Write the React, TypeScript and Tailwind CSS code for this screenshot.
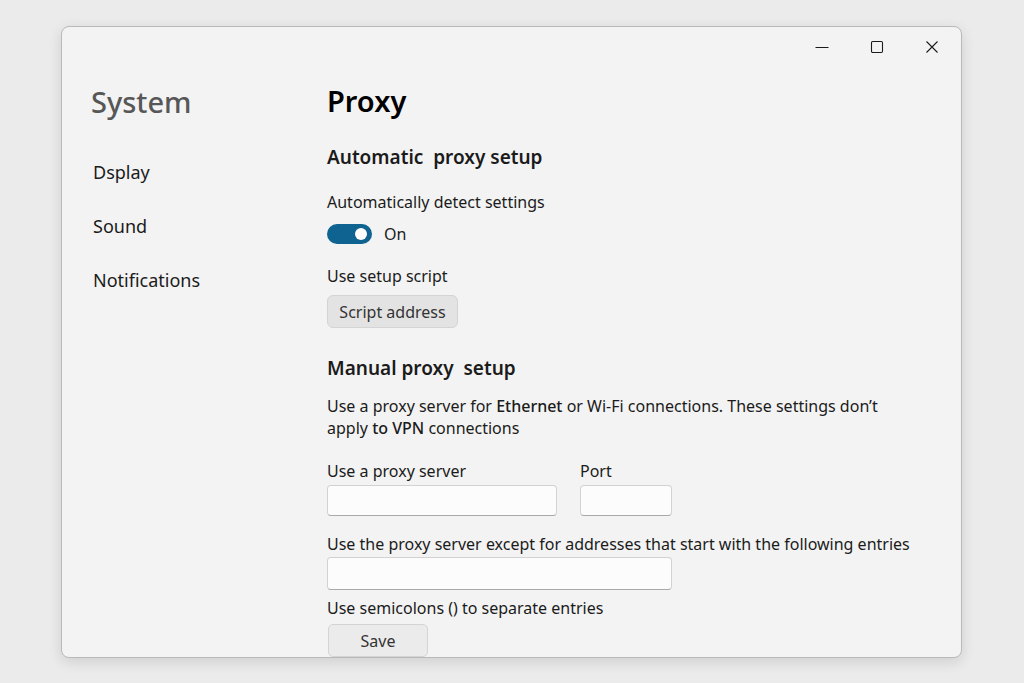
import React from "react";

const font = { fontFamily: '"Noto Sans", "Open Sans", sans-serif' };

function Toggle() {
  return (
    <div className="relative h-[20px] w-[45px] rounded-full bg-[#0e6391]">
      <div className="absolute right-[5px] top-[4px] h-[12px] w-[12px] rounded-full bg-white" />
    </div>
  );
}

export default function App() {
  return (
    <div
      className="h-[683px] w-full overflow-hidden bg-[#ebebeb] pl-[61px] pt-[26px] text-[#1b1b1b]"
      style={font}
    >
      <div className="h-[632px] w-[901px] overflow-hidden rounded-[8px] border border-[#b9b9b9] bg-[#f3f3f3] shadow-[0_4px_14px_rgba(0,0,0,0.12)]">
        {/* title bar */}
        <div className="flex h-[39px] justify-end pr-[2px]">
          <div className="flex w-[55px] items-center justify-center">
            <svg width="16" height="16" viewBox="0 0 16 16">
              <path d="M1.5 8.5h13" stroke="#1b1b1b" strokeWidth="1.1" />
            </svg>
          </div>
          <div className="flex w-[55px] items-center justify-center">
            <svg width="16" height="16" viewBox="0 0 16 16">
              <rect x="2.5" y="2.5" width="11" height="11" rx="1.2" fill="none" stroke="#1b1b1b" strokeWidth="1.1" />
            </svg>
          </div>
          <div className="flex w-[55px] items-center justify-center">
            <svg width="16" height="16" viewBox="0 0 16 16">
              <path d="M2.5 2.5l11 11M13.5 2.5l-11 11" stroke="#1b1b1b" strokeWidth="1.1" />
            </svg>
          </div>
        </div>

        <div className="flex">
          {/* sidebar */}
          <div className="w-[265px] shrink-0 pl-[29px]">
            <div className="mt-[18px] text-[29px] font-medium leading-[36px] text-[#575757]">System</div>
            <div className="ml-[2px] mt-[39px] text-[18px] leading-[26px]">Dsplay</div>
            <div className="ml-[2px] mt-[28px] text-[18px] leading-[26px]">Sound</div>
            <div className="ml-[2px] mt-[28px] text-[18px] leading-[26px]">Notifications</div>
          </div>

          {/* main */}
          <div className="flex-1">
            <div className="mt-[16px] text-[29px] font-semibold leading-[38px] text-black">Proxy</div>
            <div className="mt-[24px] whitespace-pre text-[19px] font-semibold leading-[26px]">Automatic  proxy setup</div>
            <div className="mt-[21px] text-[16px] leading-[22px]">Automatically detect settings</div>
            <div className="mt-[11px] flex h-[20px] items-center gap-[12px]">
              <Toggle />
              <span className="text-[16px] leading-[20px]">On</span>
            </div>
            <div className="mt-[21px] text-[16px] leading-[22px]">Use setup script</div>
            <button className="mt-[8px] flex h-[33px] w-[131px] items-center justify-center rounded-[6px] border border-[#d4d4d4] bg-[#e3e3e3] text-[16px] text-[#333333]">
              Script address
            </button>
            <div className="mt-[27px] whitespace-pre text-[19px] font-semibold leading-[26px]">Manual proxy  setup</div>
            <p className="mt-[14px] w-[575px] text-[16px] leading-[22px]">
              Use a proxy server for <span className="font-medium">Ethernet</span> or Wi-Fi connections. These settings don’t apply{" "}
              <span className="font-medium">to VPN</span> connections
            </p>
            <div className="mt-[21px] flex gap-[23px]">
              <div className="w-[230px]">
                <div className="text-[16px] leading-[22px]">Use a proxy server</div>
                <div className="mt-[3px] h-[31px] rounded-[4px] border border-[#d2d2d2] border-b-[#a9a9a9] bg-[#fcfcfc]" />
              </div>
              <div className="w-[92px]">
                <div className="text-[16px] leading-[22px]">Port</div>
                <div className="mt-[3px] h-[31px] rounded-[4px] border border-[#d2d2d2] border-b-[#a9a9a9] bg-[#fcfcfc]" />
              </div>
            </div>
            <div className="mt-[17px] text-[16px] leading-[22px]">
              Use the proxy server except for addresses that start with the following entries
            </div>
            <div className="mt-[2px] h-[33px] w-[345px] rounded-[4px] border border-[#d2d2d2] border-b-[#a9a9a9] bg-[#fcfcfc]" />
            <div className="mt-[7px] text-[16px] leading-[22px]">Use semicolons () to separate entries</div>
            <button className="ml-[1px] mt-[5px] flex h-[33px] w-[100px] items-center justify-center rounded-[5px] border border-[#d4d4d4] bg-[#ebebeb] text-[16px] text-[#333333]">
              Save
            </button>
          </div>
        </div>
      </div>
    </div>
  );
}
